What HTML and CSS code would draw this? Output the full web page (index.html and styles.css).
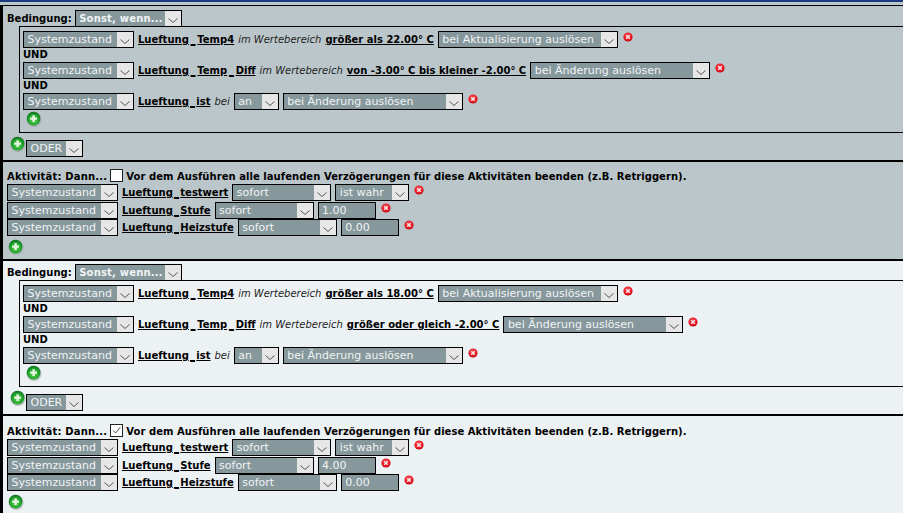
FILE: index.html
```html
<!DOCTYPE html>
<html lang="de">
<head>
<meta charset="utf-8">
<title>Programm</title>
<link rel="stylesheet" href="styles.css">
</head>
<body>
<svg class="defs" width="0" height="0" aria-hidden="true">
  <defs>
    <radialGradient id="gGreen" cx="50%" cy="60%" r="60%"><stop offset="0" stop-color="#5fd455"/><stop offset="0.65" stop-color="#22a52c"/><stop offset="1" stop-color="#0c6a1c"/></radialGradient>
    <radialGradient id="gRed" cx="45%" cy="35%" r="65%"><stop offset="0" stop-color="#f4545a"/><stop offset="0.7" stop-color="#e8141f"/><stop offset="1" stop-color="#b80e16"/></radialGradient>
    <symbol id="chev" viewBox="0 0 16 15"><path d="M3.5 7.5 L8 11.5 L12.5 7.5" fill="none" stroke="#555" stroke-width="1"/></symbol>
    <symbol id="add" viewBox="0 0 16 16"><circle cx="8" cy="8.4" r="7.6" fill="#8f9c9c" opacity=".55"/><circle cx="7.6" cy="7.6" r="6.8" fill="url(#gGreen)"/><path d="M7.6 4.2v6.8M4.2 7.6h6.8" stroke="#e6f5e2" stroke-width="2.4"/></symbol>
    <symbol id="del" viewBox="0 0 10 10"><circle cx="5" cy="5" r="4.6" fill="url(#gRed)"/><path d="M3.2 3.2l3.6 3.6M6.8 3.2L3.2 6.8" stroke="#f6e4e4" stroke-width="1.5"/></symbol>
    <symbol id="tick" viewBox="0 0 13 13"><path d="M2.5 6.5 L5.5 9.5 L11 2.5" fill="none" stroke="#444" stroke-width="1.1"/></symbol>
  </defs>
</svg>
<main class="page">

<section class="panel dark cond">
  <div class="head"><b>Bedingung:</b><span class="sel w-cond bold"><span class="val">Sonst, wenn...</span><span class="btn"><svg><use href="#chev"/></svg></span></span></div>
  <div class="box">
    <div class="row"><span class="sel w-sys"><span class="val">Systemzustand</span><span class="btn"><svg><use href="#chev"/></svg></span></span><a class="lnk">Lueftung<span class="us wide">_</span>Temp4</a><i>im Wertebereich</i><a class="lnk">größer als 22.00° C</a><span class="sel w-trig"><span class="val">bei Aktualisierung auslösen</span><span class="btn"><svg><use href="#chev"/></svg></span></span><svg class="del"><use href="#del"/></svg></div>
    <div class="und">UND</div>
    <div class="row"><span class="sel w-sys"><span class="val">Systemzustand</span><span class="btn"><svg><use href="#chev"/></svg></span></span><a class="lnk">Lueftung<span class="us wide">_</span>Temp<span class="us wide">_</span>Diff</a><i>im Wertebereich</i><a class="lnk">von -3.00° C bis kleiner -2.00° C</a><span class="sel w-trig"><span class="val">bei Änderung auslösen</span><span class="btn"><svg><use href="#chev"/></svg></span></span><svg class="del"><use href="#del"/></svg></div>
    <div class="und">UND</div>
    <div class="row"><span class="sel w-sys"><span class="val">Systemzustand</span><span class="btn"><svg><use href="#chev"/></svg></span></span><a class="lnk">Lueftung<span class="us">_</span>ist</a><i>bei</i><span class="sel w-an"><span class="val">an</span><span class="btn"><svg><use href="#chev"/></svg></span></span><span class="sel w-trig"><span class="val">bei Änderung auslösen</span><span class="btn"><svg><use href="#chev"/></svg></span></span><svg class="del"><use href="#del"/></svg></div>
    <svg class="add inner"><use href="#add"/></svg>
  </div>
  <div class="oder"><svg class="add"><use href="#add"/></svg><span class="sel w-oder"><span class="val">ODER</span><span class="btn"><svg><use href="#chev"/></svg></span></span></div>
</section>

<section class="panel dark action">
  <div class="acthead"><b class="actlabel">Aktivität: Dann...</b><span class="check"></span><b>Vor dem Ausführen alle laufenden Verzögerungen für diese Aktivitäten beenden (z.B. Retriggern).</b></div>
  <div class="row tight"><span class="sel w-sys"><span class="val">Systemzustand</span><span class="btn"><svg><use href="#chev"/></svg></span></span><a class="lnk">Lueftung<span class="us">_</span>testwert</a><span class="sel w-when"><span class="val">sofort</span><span class="btn"><svg><use href="#chev"/></svg></span></span><span class="sel w-bool"><span class="val">ist wahr</span><span class="btn"><svg><use href="#chev"/></svg></span></span><svg class="del"><use href="#del"/></svg></div>
  <div class="row tight"><span class="sel w-sys"><span class="val">Systemzustand</span><span class="btn"><svg><use href="#chev"/></svg></span></span><a class="lnk">Lueftung<span class="us">_</span>Stufe</a><span class="sel w-when"><span class="val">sofort</span><span class="btn"><svg><use href="#chev"/></svg></span></span><span class="sel w-num"><span class="val">1.00</span></span><svg class="del"><use href="#del"/></svg></div>
  <div class="row tight"><span class="sel w-sys"><span class="val">Systemzustand</span><span class="btn"><svg><use href="#chev"/></svg></span></span><a class="lnk">Lueftung<span class="us">_</span>Heizstufe</a><span class="sel w-when"><span class="val">sofort</span><span class="btn"><svg><use href="#chev"/></svg></span></span><span class="sel w-num"><span class="val">0.00</span></span><svg class="del"><use href="#del"/></svg></div>
  <svg class="add"><use href="#add"/></svg>
</section>

<section class="panel light cond">
  <div class="head"><b>Bedingung:</b><span class="sel w-cond bold"><span class="val">Sonst, wenn...</span><span class="btn"><svg><use href="#chev"/></svg></span></span></div>
  <div class="box">
    <div class="row"><span class="sel w-sys"><span class="val">Systemzustand</span><span class="btn"><svg><use href="#chev"/></svg></span></span><a class="lnk">Lueftung<span class="us wide">_</span>Temp4</a><i>im Wertebereich</i><a class="lnk">größer als 18.00° C</a><span class="sel w-trig"><span class="val">bei Aktualisierung auslösen</span><span class="btn"><svg><use href="#chev"/></svg></span></span><svg class="del"><use href="#del"/></svg></div>
    <div class="und">UND</div>
    <div class="row"><span class="sel w-sys"><span class="val">Systemzustand</span><span class="btn"><svg><use href="#chev"/></svg></span></span><a class="lnk">Lueftung<span class="us wide">_</span>Temp<span class="us wide">_</span>Diff</a><i>im Wertebereich</i><a class="lnk">größer oder gleich -2.00° C</a><span class="sel w-trig"><span class="val">bei Änderung auslösen</span><span class="btn"><svg><use href="#chev"/></svg></span></span><svg class="del"><use href="#del"/></svg></div>
    <div class="und">UND</div>
    <div class="row"><span class="sel w-sys"><span class="val">Systemzustand</span><span class="btn"><svg><use href="#chev"/></svg></span></span><a class="lnk">Lueftung<span class="us">_</span>ist</a><i>bei</i><span class="sel w-an"><span class="val">an</span><span class="btn"><svg><use href="#chev"/></svg></span></span><span class="sel w-trig"><span class="val">bei Änderung auslösen</span><span class="btn"><svg><use href="#chev"/></svg></span></span><svg class="del"><use href="#del"/></svg></div>
    <svg class="add inner"><use href="#add"/></svg>
  </div>
  <div class="oder"><svg class="add"><use href="#add"/></svg><span class="sel w-oder"><span class="val">ODER</span><span class="btn"><svg><use href="#chev"/></svg></span></span></div>
</section>

<section class="panel light action">
  <div class="acthead"><b class="actlabel">Aktivität: Dann...</b><span class="check"><svg><use href="#tick"/></svg></span><b>Vor dem Ausführen alle laufenden Verzögerungen für diese Aktivitäten beenden (z.B. Retriggern).</b></div>
  <div class="row tight"><span class="sel w-sys"><span class="val">Systemzustand</span><span class="btn"><svg><use href="#chev"/></svg></span></span><a class="lnk">Lueftung<span class="us">_</span>testwert</a><span class="sel w-when"><span class="val">sofort</span><span class="btn"><svg><use href="#chev"/></svg></span></span><span class="sel w-bool"><span class="val">ist wahr</span><span class="btn"><svg><use href="#chev"/></svg></span></span><svg class="del"><use href="#del"/></svg></div>
  <div class="row tight"><span class="sel w-sys"><span class="val">Systemzustand</span><span class="btn"><svg><use href="#chev"/></svg></span></span><a class="lnk">Lueftung<span class="us">_</span>Stufe</a><span class="sel w-when"><span class="val">sofort</span><span class="btn"><svg><use href="#chev"/></svg></span></span><span class="sel w-num"><span class="val">4.00</span></span><svg class="del"><use href="#del"/></svg></div>
  <div class="row tight"><span class="sel w-sys"><span class="val">Systemzustand</span><span class="btn"><svg><use href="#chev"/></svg></span></span><a class="lnk">Lueftung<span class="us">_</span>Heizstufe</a><span class="sel w-when"><span class="val">sofort</span><span class="btn"><svg><use href="#chev"/></svg></span></span><span class="sel w-num"><span class="val">0.00</span></span><svg class="del"><use href="#del"/></svg></div>
  <svg class="add"><use href="#add"/></svg>
</section>

</main>
</body>
</html>
```
FILE: styles.css
```css
* { box-sizing: border-box; }
html, body { margin: 0; padding: 0; height: 513px; overflow: hidden; }
body {
  background: #bbc6ca;
  border-top: 2px solid #1c3a80;
  font-family: "DejaVu Sans", Verdana, sans-serif;
  font-size: 10px;
  color: #000;
}
.defs { position: absolute; }
.page {
  margin-top: 3px;
  border-top: 1px solid #000;
  border-left: 3px solid #000;
}
.panel { padding: 4px 0 0 4px; border-bottom: 2px solid #000; }
.dark { background: #bbc6ca; }
.light { background: #ecf1f4; }
.dark.cond { height: 156px; }
.dark.action { height: 99px; }
.light.cond { height: 155px; padding-top: 3px; }
.light.action { height: 120px; padding-top: 5px; border-bottom: 0; }

b, .lnk, .und { font-weight: bold; }
.head { display: flex; align-items: center; gap: 3px; height: 16px; }
.box {
  margin: 0 0 0 12px;
  padding: 4px 0 0 3px;
  border: 1px solid #000;
  border-right: 0;
  height: 107px;
}
.row { display: flex; align-items: center; gap: 4px; height: 17px; white-space: nowrap; }
.row.tight { height: 17.5px; }
.und { height: 14px; line-height: 13px; }
.lnk { color: #000; text-decoration: underline; }
.us { padding: 0 1.25px; }
.us.wide { padding: 0 1.75px; }
i { color: #222; }

.sel {
  display: inline-flex;
  flex: none;
  height: 17px;
  border: 1px solid #000;
  background: #87989c;
  color: #f0f4f5;
  font-size: 11px;
  line-height: 15px;
  white-space: nowrap;
}
.sel.bold { font-size: 10px; font-weight: bold; letter-spacing: .2px; }
.val { flex: 1; padding-left: 3.5px; overflow: hidden; }
.btn { flex: none; width: 16px; background: #e6e6e6; }
.btn svg { display: block; width: 16px; height: 15px; }
.w-sys { width: 111px; }
.w-cond { width: 107px; }
.w-trig { width: 180px; }
.w-an { width: 45px; }
.w-oder { width: 57px; }
.w-when { width: 99px; }
.w-bool { width: 74px; }
.w-num { width: 58px; }

.del { width: 10px; height: 10px; flex: none; margin: 0 0 5px 1px; }
.add { width: 16px; height: 16px; display: block; }
.add.inner { margin: 1px 0 0 3px; }
.oder { display: flex; align-items: flex-start; margin: 3px 0 0 3px; }
.oder .sel { margin-top: 4px; }

.acthead { display: flex; align-items: flex-end; gap: 3px; height: 18px; padding-bottom: 2px; white-space: nowrap; }
.acthead b { letter-spacing: .05px; }
.acthead .actlabel { letter-spacing: .18px; }
.check {
  width: 13px; height: 13px;
  background: #fff;
  border: 1px solid #222;
}
.check svg { display: block; width: 11px; height: 11px; }
.action > .add { margin-top: 2px; margin-left: 1px; }
```
